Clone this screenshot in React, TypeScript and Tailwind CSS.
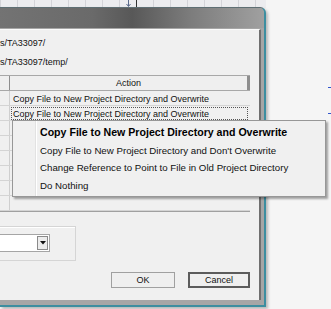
import React from 'react';

const rows = [
  'Copy File to New Project Directory and Overwrite',
  'Copy File to New Project Directory and Overwrite',
  '',
  '',
  '',
  '',
  '',
  '',
];

const menuItems = [
  { label: 'Copy File to New Project Directory and Overwrite', bold: true },
  { label: "Copy File to New Project Directory and Don't Overwrite", bold: false },
  { label: 'Change Reference to Point to File in Old Project Directory', bold: false },
  { label: 'Do Nothing', bold: false },
];

function ActionTable() {
  return (
    <div className="mt-[3px] h-[137px] w-[250px] border-b border-[#a0a0a0] overflow-hidden bg-[#f0f0f0]">
      {/* Header */}
      <div className="flex h-[16px] border-y border-[#a8a8a8] bg-[#efefef]">
        <div className="w-[10px] border-r border-[#8e8e8e]" />
        <div className="flex-1 text-center leading-[14px] border-r-[3px] border-[#8e8e8e]">Action</div>
      </div>
      {rows.map((r, i) => (
        <div key={i} className="flex h-[15px] border-b border-[#d4d4d4]">
          <div className="w-[10px] shrink-0 border-r border-[#cfcfcf]" />
          <div className="flex-1 pl-[1px] pr-[2px] pt-[1px]">
            <div
              className={
                'h-[13px] pl-[1px] leading-[12px] whitespace-nowrap ' +
                (i === 1 ? 'border border-dotted border-[#555]' : 'border border-transparent')
              }
            >
              {r}
            </div>
          </div>
        </div>
      ))}
    </div>
  );
}

function ContextMenu() {
  return (
    <div className="absolute left-[12px] top-[120px] w-[314px] h-[77px] bg-[#f0f0f0] border border-[#979797] shadow-[2px_2px_2px_rgba(0,0,0,0.35)] flex text-[9.7px] text-[#111]">
      <div className="w-[23px] shrink-0 border-r border-[#e2e2e2] shadow-[1px_0_0_#fff]" />
      <div className="flex flex-col pt-[3px] pl-[4px]">
        {menuItems.map((m) => (
          <div
            key={m.label}
            className={'h-[17.5px] leading-[17px] whitespace-nowrap ' + (m.bold ? 'font-bold text-[10.6px] text-black' : '')}
          >
            {m.label}
          </div>
        ))}
      </div>
    </div>
  );
}

export default function App() {
  return (
    <div
      className="relative w-[331px] h-[309px] overflow-hidden bg-[#f5f5f5] text-[9px] text-[#111]"
      style={{ fontFamily: '"Liberation Sans", Arial, sans-serif' }}
    >
      {/* desktop backdrop strip */}
      <div className="h-[8px] w-[266px] bg-[#ececef] bg-[image:repeating-linear-gradient(90deg,#d4d4d9_0_1px,transparent_1px_17px)] relative">
        <svg className="absolute left-[126px] top-0" width="5" height="7" viewBox="0 0 5 7">
          <path d="M2.5 0 V6 M0.5 4 L2.5 6.5 L4.5 4" stroke="#5a6a8a" strokeWidth="1" fill="none" />
        </svg>
        <div className="absolute left-[136px] top-0 h-[8px] w-[1px] bg-[#333]" />
      </div>

      {/* blue marks on the page behind */}
      <div className="absolute left-[328px] top-[87px] h-[1px] w-[3px] bg-[#3355cc]" />
      <div className="absolute left-[328px] top-[113px] h-[1px] w-[3px] bg-[#3355cc]" />

      {/* dialog window */}
      <div className="absolute left-0 top-[7px] w-[266px] h-[300px] rounded-tr-[6px] border-t border-r-2 border-b-2 border-[#5f6f74] border-r-[#3c8ea0] border-b-[#3c8ea0] bg-[#a6a6a6] shadow-[2px_2px_3px_rgba(0,0,0,0.25)] flex flex-col">
        <div className="h-[20px] rounded-tr-[5px] bg-[image:linear-gradient(90deg,#737373,#6a6a6a_35%,#585858_50%,#7c7c7c_72%,#a0a0a0)]" />
        <div className="flex-1 mr-[3px] mb-[5px] mt-[1px] bg-[#f0f0f0] border-t border-[#fbfbfb] border-r-2 border-r-[#6f6f6f] flex flex-col">
          <div className="pt-[4px] leading-[19px]">s/TA33097/</div>
          <div className="leading-[19px]">s/TA33097/temp/</div>
          <ActionTable />

          <div className="mt-[14px] w-[76px] h-[35px] border border-[#d5d5d5] border-l-0 shadow-[inset_0_1px_0_#fff] pt-[7px]">
            <div className="w-[50px] h-[18px] bg-white border border-[#a5a5a5] border-l-0 flex justify-end items-center pr-[1px]">
              <div className="w-[11px] h-[14px] border border-[#8a8a8a] bg-[#ececec] flex items-center justify-center">
                <svg width="6" height="4" viewBox="0 0 6 4">
                  <path d="M0 0 H6 L3 3.5 Z" fill="#111" />
                </svg>
              </div>
            </div>
          </div>

          <div className="mt-[11px] flex gap-[13px] pl-[111px]">
            <div className="w-[64px] h-[16px] border border-[#a0a0a0] bg-[#efefef] text-center leading-[14px]">OK</div>
            <div className="w-[62px] h-[16px] border-2 border-[#5c5c5c] bg-[#efefef] text-center leading-[12px]">Cancel</div>
          </div>
        </div>
      </div>

      <ContextMenu />
    </div>
  );
}
